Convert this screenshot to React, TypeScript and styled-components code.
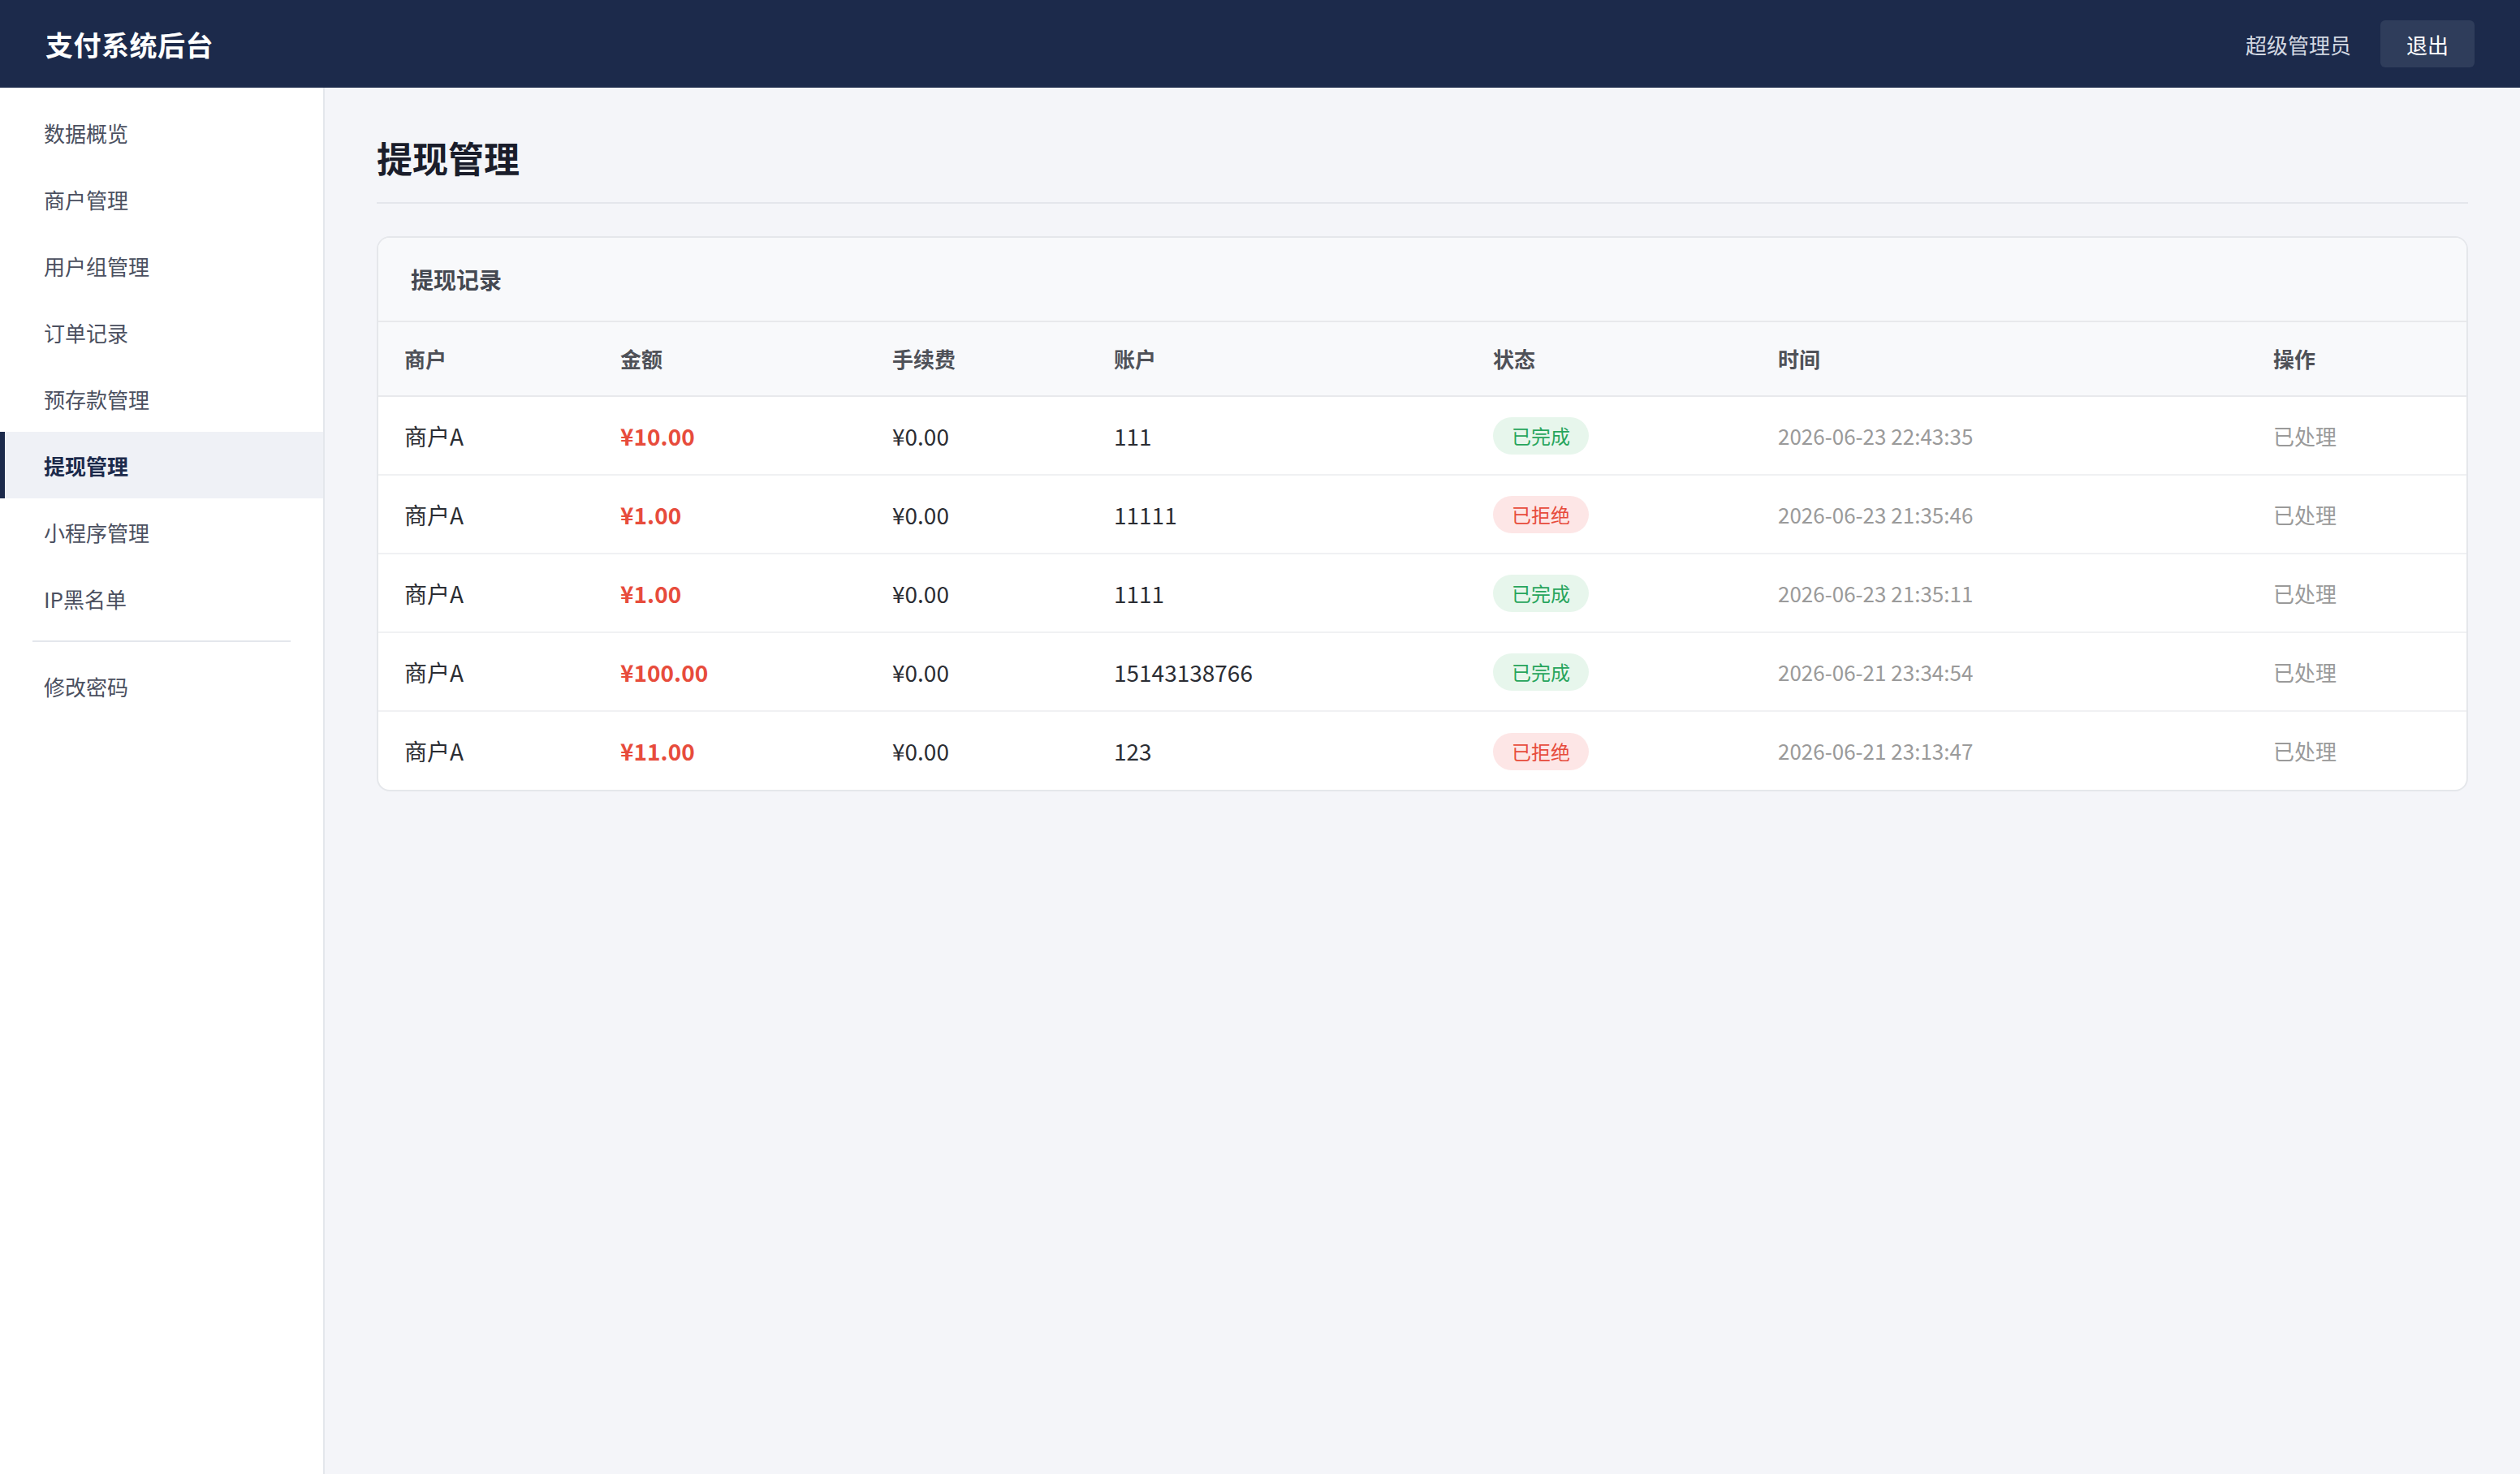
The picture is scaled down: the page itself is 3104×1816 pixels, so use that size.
import styled, { createGlobalStyle } from "styled-components";

const GlobalStyle = createGlobalStyle`
  html, body {
    margin: 0;
    padding: 0;
    background: #f4f5f9;
  }
  body {
    font-family: "Noto Sans CJK SC", "Noto Sans", sans-serif;
  }
  * {
    box-sizing: border-box;
  }
`;

const navItems = [
  "数据概览",
  "商户管理",
  "用户组管理",
  "订单记录",
  "预存款管理",
  "提现管理",
  "小程序管理",
  "IP黑名单",
];

const columns = [
  { title: "商户", width: 266 },
  { title: "金额", width: 335 },
  { title: "手续费", width: 273 },
  { title: "账户", width: 467 },
  { title: "状态", width: 351 },
  { title: "时间", width: 610 },
  { title: "操作", width: 270 },
];

type Status = "done" | "rejected";

const records: {
  merchant: string;
  amount: string;
  fee: string;
  account: string;
  status: Status;
  time: string;
}[] = [
  { merchant: "商户A", amount: "¥10.00", fee: "¥0.00", account: "111", status: "done", time: "2026-06-23 22:43:35" },
  { merchant: "商户A", amount: "¥1.00", fee: "¥0.00", account: "11111", status: "rejected", time: "2026-06-23 21:35:46" },
  { merchant: "商户A", amount: "¥1.00", fee: "¥0.00", account: "1111", status: "done", time: "2026-06-23 21:35:11" },
  { merchant: "商户A", amount: "¥100.00", fee: "¥0.00", account: "15143138766", status: "done", time: "2026-06-21 23:34:54" },
  { merchant: "商户A", amount: "¥11.00", fee: "¥0.00", account: "123", status: "rejected", time: "2026-06-21 23:13:47" },
];

export default function App() {
  return (
    <Page>
      <GlobalStyle />
      <TopBar>
        <Brand>支付系统后台</Brand>
        <UserArea>
          <UserName>超级管理员</UserName>
          <LogoutButton>退出</LogoutButton>
        </UserArea>
      </TopBar>
      <Body>
        <Sidebar>
          {navItems.map((item) => (
            <NavItem key={item} $active={item === "提现管理"}>
              {item}
            </NavItem>
          ))}
          <NavDivider />
          <NavItem>修改密码</NavItem>
        </Sidebar>
        <Main>
          <PageTitle>提现管理</PageTitle>
          <Card>
            <CardHeader>提现记录</CardHeader>
            <Table>
              <thead>
                <tr>
                  {columns.map((c) => (
                    <Th key={c.title} $width={c.width}>
                      {c.title}
                    </Th>
                  ))}
                </tr>
              </thead>
              <tbody>
                {records.map((r, i) => (
                  <Row key={i}>
                    <Td>{r.merchant}</Td>
                    <Td>
                      <Amount>{r.amount}</Amount>
                    </Td>
                    <Td>{r.fee}</Td>
                    <Td>{r.account}</Td>
                    <Td>
                      <Badge $status={r.status}>
                        {r.status === "done" ? "已完成" : "已拒绝"}
                      </Badge>
                    </Td>
                    <Td $muted>{r.time}</Td>
                    <Td $muted>已处理</Td>
                  </Row>
                ))}
              </tbody>
            </Table>
          </Card>
        </Main>
      </Body>
    </Page>
  );
}

const Page = styled.div`
  min-height: 100vh;
  display: flex;
  flex-direction: column;
`;

const TopBar = styled.header`
  height: 108px;
  flex-shrink: 0;
  background: #1c2a4b;
  display: flex;
  align-items: center;
  justify-content: space-between;
  padding: 0 56px;
`;

const Brand = styled.div`
  color: #ffffff;
  font-size: 34px;
  font-weight: 700;
  letter-spacing: 0.5px;
`;

const UserArea = styled.div`
  display: flex;
  align-items: center;
  gap: 36px;
`;

const UserName = styled.span`
  color: #d3d8e2;
  font-size: 26px;
`;

const LogoutButton = styled.button`
  height: 58px;
  padding: 0 32px;
  border: none;
  border-radius: 6px;
  background: #2f3d5b;
  color: #ffffff;
  font-family: inherit;
  font-size: 26px;
  cursor: pointer;
`;

const Body = styled.div`
  flex: 1;
  display: flex;
`;

const Sidebar = styled.nav`
  width: 400px;
  flex-shrink: 0;
  background: #ffffff;
  border-right: 2px solid #e4e7ec;
  padding-top: 14px;
  display: flex;
  flex-direction: column;
`;

const NavItem = styled.div<{ $active?: boolean }>`
  height: 82px;
  display: flex;
  align-items: center;
  padding-left: 54px;
  font-size: 26px;
  color: ${(p) => (p.$active ? "#1c2a4b" : "#4b5060")};
  font-weight: ${(p) => (p.$active ? 700 : 400)};
  background: ${(p) => (p.$active ? "#eff1f6" : "transparent")};
  box-shadow: ${(p) => (p.$active ? "inset 6px 0 0 #1c2a4b" : "none")};
`;

const NavDivider = styled.div`
  height: 2px;
  background: #e4e7ec;
  margin: 11px 40px 13px;
`;

const Main = styled.main`
  flex: 1;
  padding: 56px 64px 64px;
`;

const PageTitle = styled.h1`
  margin: 0 0 40px;
  font-size: 44px;
  line-height: 60px;
  font-weight: 700;
  color: #1a1d2b;
  padding-bottom: 25px;
  border-bottom: 2px solid #e4e6ec;
`;

const Card = styled.section`
  background: #ffffff;
  border: 2px solid #e5e7eb;
  border-radius: 16px;
  overflow: hidden;
`;

const CardHeader = styled.div`
  background: #f8f9fb;
  padding: 31px 40px;
  font-size: 28px;
  line-height: 40px;
  font-weight: 700;
  color: #444851;
  border-bottom: 2px solid #e8e9ec;
`;

const Table = styled.table`
  width: 100%;
  border-collapse: collapse;
  table-layout: fixed;
`;

const Th = styled.th<{ $width: number }>`
  width: ${(p) => p.$width}px;
  text-align: left;
  background: #f8f9fb;
  padding: 27px 32px;
  font-size: 26px;
  line-height: 36px;
  font-weight: 700;
  color: #4f5158;
  border-bottom: 2px solid #e8e9ec;
`;

const Row = styled.tr`
  height: 97px;
  border-bottom: 2px solid #f0f1f3;
  &:last-child {
    border-bottom: none;
  }
`;

const Td = styled.td<{ $muted?: boolean }>`
  padding: 0 32px;
  line-height: 40px;
  font-size: ${(p) => (p.$muted ? "26px" : "28px")};
  color: ${(p) => (p.$muted ? "#9a9a9a" : "#2b2d33")};
  vertical-align: middle;
  white-space: nowrap;
`;

const Amount = styled.span`
  color: #e74c3c;
  font-weight: 700;
`;

const Badge = styled.span<{ $status: Status }>`
  display: inline-flex;
  align-items: center;
  height: 46px;
  vertical-align: middle;
  padding: 0 23px;
  border-radius: 999px;
  font-size: 24px;
  line-height: 1;
  color: ${(p) => (p.$status === "done" ? "#27a55c" : "#e74c3c")};
  background: ${(p) => (p.$status === "done" ? "#e7f6ec" : "#fde6e6")};
`;
